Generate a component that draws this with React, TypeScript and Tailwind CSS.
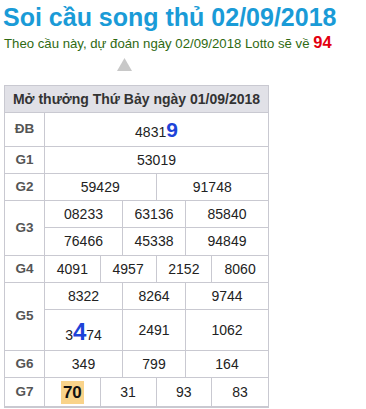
import React from "react";

const FONT = { fontFamily: '"Liberation Sans", Arial, sans-serif' };

function Label({ text, className = "" }: { text: string; className?: string }) {
  return (
    <div
      className={`flex w-[40px] shrink-0 items-center justify-center border-r border-[#c9c9d1] text-[13.5px] font-bold text-[#555] ${className}`}
    >
      {text}
    </div>
  );
}

function Cell({ children, className = "" }: { children: React.ReactNode; className?: string }) {
  return (
    <div className={`flex items-center justify-center text-[14px] text-[#222] ${className}`}>{children}</div>
  );
}

export default function App() {
  const g3 = [
    ["08233", "63136", "85840"],
    ["76466", "45338", "94849"],
  ];

  return (
    <div className="h-[409px] w-[366px] bg-white" style={FONT}>
      <h1 className="pl-[3px] pt-[3px] text-[25px] font-bold leading-[29px] text-[#1a9bd7]">
        Soi cầu song thủ 02/09/2018
      </h1>
      <p className="pl-[4px] pt-[2px] text-[13.2px] leading-[17px] text-[#2f6a12]">
        Theo cầu này, dự đoán ngày 02/09/2018 Lotto sẽ về{" "}
        <span className="text-[16.5px] font-bold text-[#e3000f]">94</span>
      </p>
      <div className="flex pl-[117px] pt-[6px]">
        <svg width="15" height="13" viewBox="0 0 15 13">
          <polygon points="7.5,0 15,13 0,13" fill="#c8c8c8" />
        </svg>
      </div>

      <div className="ml-[4px] mt-[14px] w-[265px] border border-b-2 border-[#c9c9d1]">
        <div className="flex h-[27px] items-center justify-center border-b border-[#c9c9d1] bg-[#e1e1e7] text-[14px] font-bold text-[#333]">
          Mở thưởng Thứ Bảy ngày 01/09/2018
        </div>

        <div className="flex h-[34px] border-b border-[#c9c9d1]">
          <Label text="ĐB" />
          <Cell className="flex-1">
            <span className="leading-none">
              4831<span className="text-[21px] font-bold text-[#1d43d8]">9</span>
            </span>
          </Cell>
        </div>

        <div className="flex h-[27px] border-b border-[#c9c9d1]">
          <Label text="G1" />
          <Cell className="flex-1">53019</Cell>
        </div>

        <div className="flex h-[27px] border-b border-[#c9c9d1]">
          <Label text="G2" />
          <div className="grid flex-1 grid-cols-2">
            <Cell className="border-r border-[#c9c9d1]">59429</Cell>
            <Cell>91748</Cell>
          </div>
        </div>

        <div className="flex border-b border-[#c9c9d1]">
          <Label text="G3" />
          <div className="flex flex-1 flex-col">
            {g3.map((row, i) => (
              <div key={i} className={`flex h-[27px] ${i === 0 ? "border-b border-[#c9c9d1]" : ""}`}>
                <Cell className="w-[78px] border-r border-[#c9c9d1]">{row[0]}</Cell>
                <Cell className="w-[63px] border-r border-[#c9c9d1]">{row[1]}</Cell>
                <Cell className="flex-1">{row[2]}</Cell>
              </div>
            ))}
          </div>
        </div>

        <div className="flex h-[27px] border-b border-[#c9c9d1]">
          <Label text="G4" />
          <div className="grid flex-1 grid-cols-4">
            <Cell className="border-r border-[#c9c9d1]">4091</Cell>
            <Cell className="border-r border-[#c9c9d1]">4957</Cell>
            <Cell className="border-r border-[#c9c9d1]">2152</Cell>
            <Cell>8060</Cell>
          </div>
        </div>

        <div className="flex border-b border-[#c9c9d1]">
          <Label text="G5" />
          <div className="flex flex-1 flex-col">
            <div className="flex h-[27px] border-b border-[#c9c9d1]">
              <Cell className="w-[78px] border-r border-[#c9c9d1]">8322</Cell>
              <Cell className="w-[63px] border-r border-[#c9c9d1]">8264</Cell>
              <Cell className="flex-1">9744</Cell>
            </div>
            <div className="flex h-[40px]">
              <Cell className="w-[78px] border-r border-[#c9c9d1]">
                <span className="pt-[4px] leading-none">
                  3<span className="text-[24px] font-bold text-[#1d43d8]">4</span>74
                </span>
              </Cell>
              <Cell className="w-[63px] border-r border-[#c9c9d1]">2491</Cell>
              <Cell className="flex-1">1062</Cell>
            </div>
          </div>
        </div>

        <div className="flex h-[27px] border-b border-[#c9c9d1]">
          <Label text="G6" />
          <Cell className="w-[78px] border-r border-[#c9c9d1]">349</Cell>
          <Cell className="w-[63px] border-r border-[#c9c9d1]">799</Cell>
          <Cell className="flex-1">164</Cell>
        </div>

        <div className="flex h-[28px]">
          <Label text="G7" />
          <div className="grid flex-1 grid-cols-4">
            <Cell className="border-r border-[#c9c9d1]">
              <span className="bg-[#f9d38a] px-[2px] text-[17px] font-bold leading-[23px] text-[#111]">70</span>
            </Cell>
            <Cell className="border-r border-[#c9c9d1]">31</Cell>
            <Cell className="border-r border-[#c9c9d1]">93</Cell>
            <Cell>83</Cell>
          </div>
        </div>
      </div>
    </div>
  );
}
